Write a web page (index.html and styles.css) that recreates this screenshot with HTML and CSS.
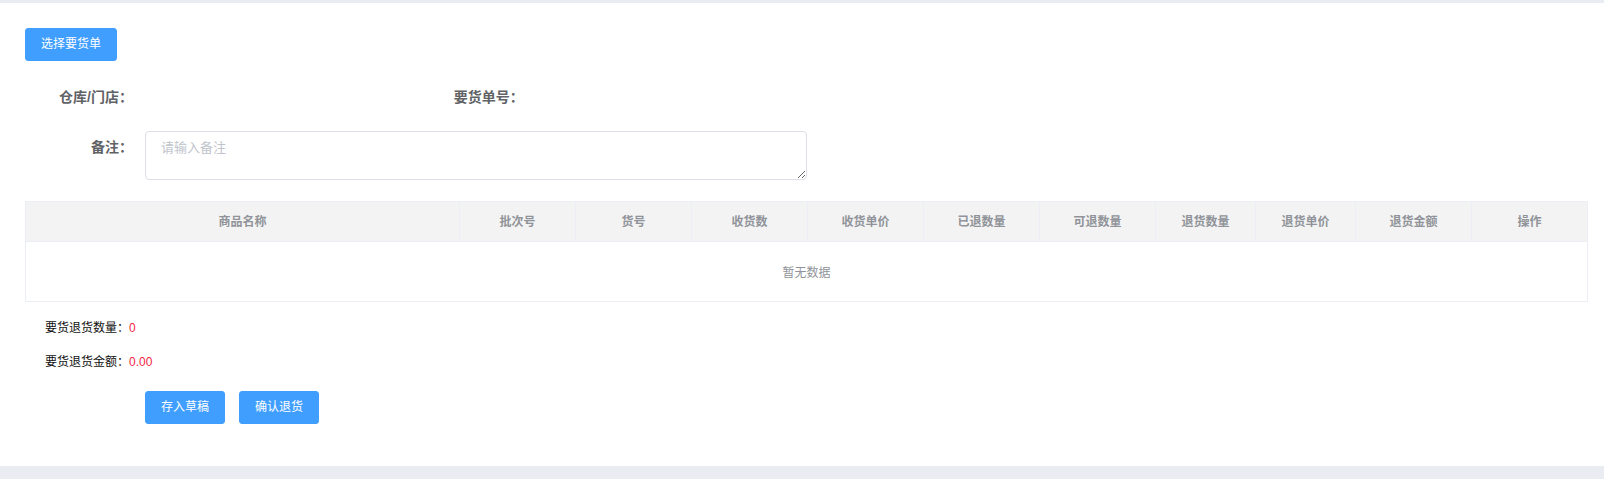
FILE: index.html
```html
<!DOCTYPE html>
<html lang="zh-CN">
<head>
<meta charset="utf-8">
<title>要货退货</title>
<link rel="stylesheet" href="styles.css">
</head>
<body>
<div class="topbar"></div>
<div class="card">
  <button class="btn btn-pick">选择要货单</button>

  <div class="form-row">
    <div class="form-item quarter">
      <label class="form-label">仓库/门店：</label>
      <div class="form-content"></div>
    </div>
    <div class="form-item quarter">
      <label class="form-label">要货单号：</label>
      <div class="form-content"></div>
    </div>
  </div>

  <div class="form-row remark-row">
    <div class="form-item half">
      <label class="form-label remark-label">备注：</label>
      <div class="form-content">
        <textarea class="textarea" placeholder="请输入备注"></textarea>
      </div>
    </div>
  </div>

  <table class="table">
    <colgroup>
      <col>
      <col class="c116"><col class="c116"><col class="c116"><col class="c116"><col class="c116"><col class="c116">
      <col class="c100"><col class="c100">
      <col class="c116"><col class="c116">
    </colgroup>
    <thead>
      <tr>
        <th>商品名称</th>
        <th>批次号</th>
        <th>货号</th>
        <th>收货数</th>
        <th>收货单价</th>
        <th>已退数量</th>
        <th>可退数量</th>
        <th>退货数量</th>
        <th>退货单价</th>
        <th>退货金额</th>
        <th>操作</th>
      </tr>
    </thead>
    <tbody>
      <tr>
        <td class="empty" colspan="11">暂无数据</td>
      </tr>
    </tbody>
  </table>

  <div class="summary">
    <div class="summary-line">要货退货数量：<span class="num">0</span></div>
    <div class="summary-line">要货退货金额：<span class="num">0.00</span></div>
  </div>

  <div class="actions">
    <button class="btn">存入草稿</button>
    <button class="btn">确认退货</button>
  </div>
</div>
<div class="bottombar"></div>
</body>
</html>
```
FILE: styles.css
```css
* {
  box-sizing: border-box;
}

html, body {
  margin: 0;
  padding: 0;
}

body {
  background: #e9edf1;
  font-family: "Liberation Sans", "Noto Sans CJK SC", sans-serif;
  width: 1604px;
  height: 479px;
  overflow: hidden;
}

.topbar {
  height: 3px;
  background: #e9edf1;
}

.card {
  background: #ffffff;
  height: 463px;
  padding: 25px 16px 0 25px;
}

.btn {
  display: inline-block;
  font-family: inherit;
  font-size: 12px;
  line-height: 13px;
  padding: 9px 15px;
  border: 1px solid #409eff;
  border-radius: 3px;
  background: #409eff;
  color: #ffffff;
  cursor: pointer;
}

.btn-pick {
  display: block;
}

.form-row {
  display: flex;
  margin-top: 16px;
  height: 40px;
  margin-bottom: 14px;
}

.remark-row {
  margin-top: 0;
  height: 49px;
  margin-bottom: 21px;
}

.form-item {
  display: flex;
}

.quarter {
  width: 25%;
}

.half {
  width: 50%;
}

.form-label {
  width: 120px;
  flex: none;
  text-align: right;
  padding-right: 12px;
  font-size: 14px;
  line-height: 40px;
  font-weight: bold;
  color: #606266;
}

.remark-label {
  line-height: 33px;
}

.form-content {
  flex: 1;
}

.textarea {
  display: block;
  width: 100%;
  height: 49px;
  padding: 5px 15px;
  border: 1px solid #dcdfe6;
  border-radius: 4px;
  font-family: inherit;
  font-size: 13px;
  line-height: 21px;
  color: #606266;
  resize: vertical;
  outline: none;
  margin: 0;
}

.textarea::placeholder {
  color: #c0c4cc;
}

.table {
  width: 100%;
  table-layout: fixed;
  border-collapse: collapse;
  border: 1px solid #ebeef5;
}

.c116 {
  width: 116px;
}

.c100 {
  width: 100px;
}

.table th {
  height: 40px;
  padding: 0;
  background: #f3f3f3;
  border-bottom: 1px solid #ebeef5;
  border-right: 1px solid #ebeef5;
  font-size: 12px;
  line-height: 16px;
  font-weight: bold;
  color: #909399;
  text-align: center;
}

.table th:last-child {
  border-right: none;
}

.table .empty {
  height: 60px;
  padding: 0;
  text-align: center;
  font-size: 12px;
  color: #909399;
}

.summary {
  margin-top: 9px;
  padding-left: 20px;
}

.summary-line {
  height: 34px;
  line-height: 34px;
  font-size: 12px;
  color: #111111;
}

.num {
  color: #f5273f;
}

.actions {
  margin-top: 12px;
  padding-left: 120px;
  display: flex;
  gap: 14px;
}

.bottombar {
  height: 13px;
  background: #e9edf1;
}
```
